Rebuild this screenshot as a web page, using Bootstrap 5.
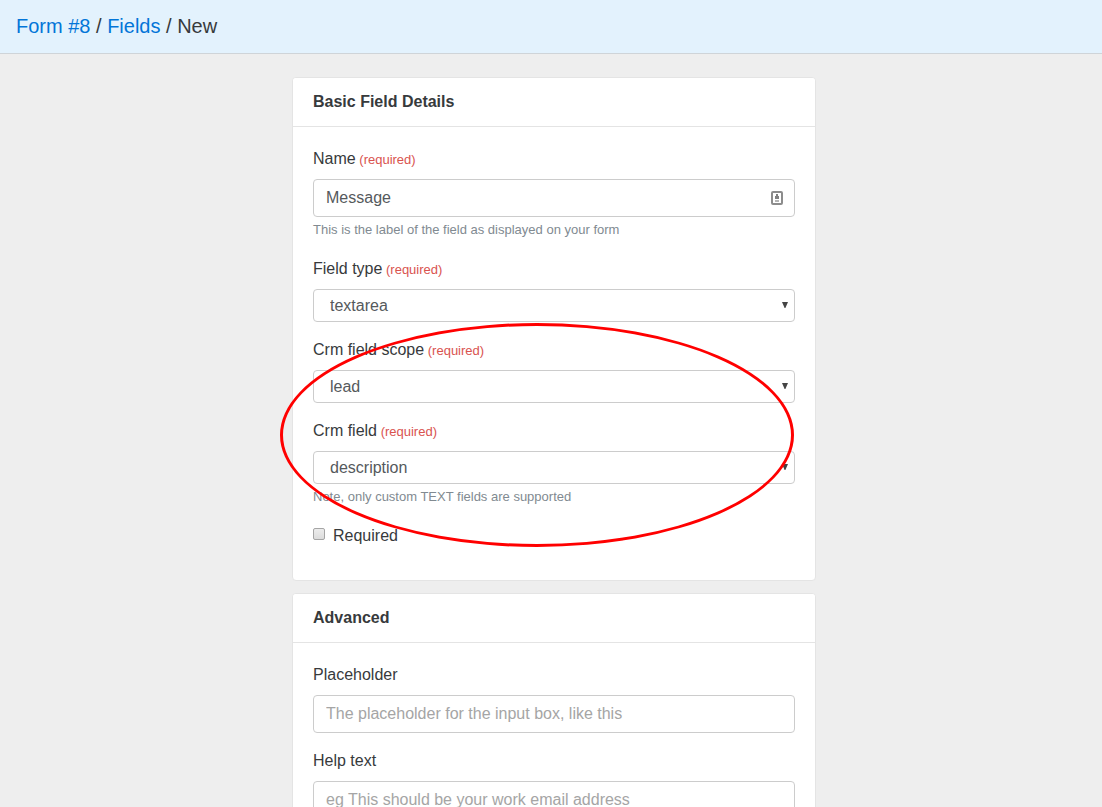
<!DOCTYPE html>
<html lang="en">
<head>
<meta charset="utf-8">
<meta name="viewport" content="width=device-width, initial-scale=1">
<title>Form #8 / Fields / New</title>
<link rel="stylesheet" href="https://cdn.jsdelivr.net/npm/bootstrap@5.3.0/dist/css/bootstrap.min.css">
<style>
  body {
    font-family: "Liberation Sans", Arial, sans-serif;
    font-size: 16px;
    color: #373a3c;
    background: #eee;
  }
  .page-bar {
    background: #e3f2fd;
    border-bottom: 1px solid #cfd4d8;
    font-size: 20px;
    line-height: 29px;
    padding: 12px 16px;
  }
  .page-bar a { color: #0275d8; text-decoration: none; }
  .page-bar a:hover { text-decoration: underline; }
  .page-main { padding: 23px 0 24px 6px; }
  .card {
    --bs-card-border-color: #e4e4e4;
    --bs-card-border-radius: 4px;
    --bs-card-inner-border-radius: 3px;
    --bs-card-cap-bg: #fff;
    --bs-card-cap-padding-y: 12px;
    --bs-card-cap-padding-x: 20px;
    --bs-card-spacer-y: 20px;
    --bs-card-spacer-x: 20px;
    --bs-card-color: #373a3c;
    margin-bottom: 12px;
  }
  .card-header { font-size: 16px; line-height: 24px; font-weight: 700; margin: 0; }
  .field { margin-bottom: 16px; }
  .form-label { display: block; margin-bottom: 8px; line-height: 24px; }
  .req { font-size: 13px; line-height: 1; color: #d9534f; white-space: pre; }
  .form-control, .form-select {
    color: #55595c;
    border-color: #ccc;
    border-radius: 4px;
  }
  .form-control { height: 38px; padding: 6px 12px; }
  .form-control::placeholder { color: #a5a5a5; }
  .form-select {
    height: 33px;
    padding: 0 28px 0 16px;
    line-height: 31px;
    background-image: url("data:image/svg+xml,%3Csvg xmlns='http://www.w3.org/2000/svg' viewBox='0 0 6 6'%3E%3Cpath fill='%23444' d='M0 0h6L3.4 6h-.8z'/%3E%3C/svg%3E");
    background-size: 6px 6px;
    background-position: right 6px top 12px;
  }
  .help-line { font-size: 13px; line-height: 20px; color: #818a91; padding: 3px 0 1px; }
  .autofill-mark { position: absolute; right: 11px; top: 12px; pointer-events: none; }
  .tick-row { line-height: 24px; gap: 8px; margin-bottom: 12px; }
  .tick-box {
    appearance: none;
    width: 12px;
    height: 12px;
    margin: 4px 0 0;
    border: 1px solid #a5a5a5;
    border-radius: 2px;
    background: linear-gradient(#ececec, #dcdcdc);
  }
  .tick-box:checked { background: #0275d8; }
  .ring {
    position: absolute;
    inset: -15px 1px 1px -33px;
    border: 3px solid #f00;
    border-radius: 50%;
    pointer-events: none;
    z-index: 2;
  }
</style>
</head>
<body>
<nav class="page-bar" aria-label="Breadcrumb">
  <a href="#">Form #8</a> / <a href="#">Fields</a> / <span>New</span>
</nav>

<main class="page-main">
  <form class="container-fluid">
    <div class="row">
      <div class="col-6 offset-3">

        <section class="card">
          <h2 class="card-header">Basic Field Details</h2>
          <div class="card-body">
            <div class="field">
              <label class="form-label" for="name">Name<span class="req"> (required)</span></label>
              <div class="position-relative">
                <input class="form-control" id="name" type="text" value="Message">
                <svg class="autofill-mark" width="14" height="15" viewBox="0 0 14 15" aria-hidden="true">
                  <rect x="2" y="0" width="10" height="14" fill="#fff"/>
                  <rect x="2" y="1" width="10" height="12" rx="1" fill="#fff" stroke="#8c8c8c" stroke-width="2"/>
                  <path fill="#808080" d="M6 3h2v2h1v3H5V5h1z"/>
                  <path fill="#b4b4b4" d="M5 9h4v2H5z"/>
                </svg>
              </div>
              <div class="help-line">This is the label of the field as displayed on your form</div>
            </div>

            <div class="field">
              <label class="form-label" for="type">Field type<span class="req"> (required)</span></label>
              <select class="form-select" id="type"><option>textarea</option></select>
            </div>

            <div class="position-relative">
              <div class="field">
                <label class="form-label" for="scope">Crm field scope<span class="req"> (required)</span></label>
                <select class="form-select" id="scope"><option>lead</option></select>
              </div>
              <div class="field">
                <label class="form-label" for="crm">Crm field<span class="req"> (required)</span></label>
                <select class="form-select" id="crm"><option>description</option></select>
                <div class="help-line">Note, only custom TEXT fields are supported</div>
              </div>
              <div class="tick-row d-flex align-items-start">
                <input class="tick-box" type="checkbox" id="required">
                <label for="required">Required</label>
              </div>
              <div class="ring"></div>
            </div>
          </div>
        </section>

        <section class="card">
          <h2 class="card-header">Advanced</h2>
          <div class="card-body">
            <div class="field">
              <label class="form-label" for="placeholder">Placeholder</label>
              <input class="form-control" id="placeholder" type="text" placeholder="The placeholder for the input box, like this">
            </div>
            <div class="field">
              <label class="form-label" for="help">Help text</label>
              <input class="form-control" id="help" type="text" placeholder="eg This should be your work email address">
            </div>
          </div>
        </section>

      </div>
    </div>
  </form>
</main>
<script src="https://cdn.jsdelivr.net/npm/bootstrap@5.3.0/dist/js/bootstrap.bundle.min.js"></script>
</body>
</html>
